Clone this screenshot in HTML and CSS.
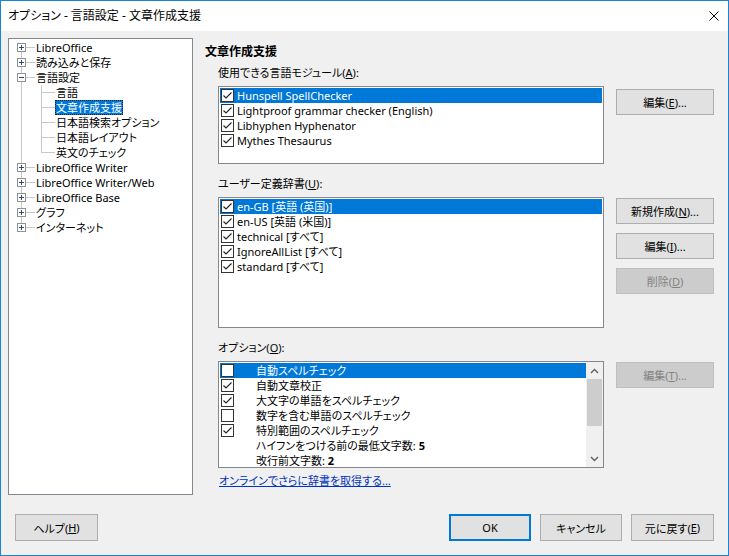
FILE: index.html
```html
<!DOCTYPE html>
<html lang="ja">
<head>
    <meta charset="UTF-8">
    <title>オプション - 言語設定 - 文章作成支援</title>
    <link rel="stylesheet" href="styles.css">
</head>
<body>
<div class="window">
    <div class="titlebar">
        <span class="title">オプション - 言語設定 - 文章作成支援</span>
        <svg class="close" width="10" height="10" viewBox="0 0 10 10"><path d="M0.5 0.5 L9.5 9.5 M9.5 0.5 L0.5 9.5" stroke="#000" stroke-width="1"/></svg>
    </div>

    <div class="body">
        <!-- navigation tree -->
        <div class="tree">
            <div class="node"><span class="exp plus"></span><span class="conn"></span><span class="txt">LibreOffice</span></div>
            <div class="node"><span class="exp plus"></span><span class="conn"></span><span class="txt">読み込みと保存</span></div>
            <div class="node"><span class="exp"></span><span class="conn"></span><span class="txt">言語設定</span></div>
            <div class="kids">
                <div class="leaf"><span class="conn2"></span><span class="txt">言語</span></div>
                <div class="leaf"><span class="conn2"></span><span class="txt sel">文章作成支援</span></div>
                <div class="leaf"><span class="conn2"></span><span class="txt">日本語検索オプション</span></div>
                <div class="leaf"><span class="conn2"></span><span class="txt">日本語レイアウト</span></div>
                <div class="leaf"><span class="conn2"></span><span class="txt">英文のチェック</span></div>
            </div>
            <div class="node"><span class="exp plus"></span><span class="conn"></span><span class="txt">LibreOffice Writer</span></div>
            <div class="node"><span class="exp plus"></span><span class="conn"></span><span class="txt">LibreOffice Writer/Web</span></div>
            <div class="node"><span class="exp plus"></span><span class="conn"></span><span class="txt">LibreOffice Base</span></div>
            <div class="node"><span class="exp plus"></span><span class="conn"></span><span class="txt">グラフ</span></div>
            <div class="node"><span class="exp plus"></span><span class="conn"></span><span class="txt">インターネット</span></div>
        </div>

        <!-- page -->
        <div class="page">
            <h2>文章作成支援</h2>

            <div class="group">
                <div class="label">使用できる言語モジュール(<u>A</u>):</div>
                <div class="list list-modules">
                    <div class="row sel"><span class="cb on"><svg width="11" height="11" viewBox="0 0 11 11"><path d="M1.5 5.5 L4 8 L9.5 2.5" fill="none" stroke="#222" stroke-width="1.1"/></svg></span>Hunspell SpellChecker</div>
                    <div class="row"><span class="cb on"><svg width="11" height="11" viewBox="0 0 11 11"><path d="M1.5 5.5 L4 8 L9.5 2.5" fill="none" stroke="#222" stroke-width="1.1"/></svg></span>Lightproof grammar checker (English)</div>
                    <div class="row"><span class="cb on"><svg width="11" height="11" viewBox="0 0 11 11"><path d="M1.5 5.5 L4 8 L9.5 2.5" fill="none" stroke="#222" stroke-width="1.1"/></svg></span>Libhyphen Hyphenator</div>
                    <div class="row"><span class="cb on"><svg width="11" height="11" viewBox="0 0 11 11"><path d="M1.5 5.5 L4 8 L9.5 2.5" fill="none" stroke="#222" stroke-width="1.1"/></svg></span>Mythes Thesaurus</div>
                </div>
                <div class="btns first">
                    <button class="btn">編集(<u>E</u>)...</button>
                </div>
            </div>

            <div class="group">
                <div class="label">ユーザー定義辞書(<u>U</u>):</div>
                <div class="list list-dicts">
                    <div class="row sel"><span class="cb on"><svg width="11" height="11" viewBox="0 0 11 11"><path d="M1.5 5.5 L4 8 L9.5 2.5" fill="none" stroke="#222" stroke-width="1.1"/></svg></span>en-GB [英語 (英国)]</div>
                    <div class="row"><span class="cb on"><svg width="11" height="11" viewBox="0 0 11 11"><path d="M1.5 5.5 L4 8 L9.5 2.5" fill="none" stroke="#222" stroke-width="1.1"/></svg></span>en-US [英語 (米国)]</div>
                    <div class="row"><span class="cb on"><svg width="11" height="11" viewBox="0 0 11 11"><path d="M1.5 5.5 L4 8 L9.5 2.5" fill="none" stroke="#222" stroke-width="1.1"/></svg></span>technical [すべて]</div>
                    <div class="row"><span class="cb on"><svg width="11" height="11" viewBox="0 0 11 11"><path d="M1.5 5.5 L4 8 L9.5 2.5" fill="none" stroke="#222" stroke-width="1.1"/></svg></span>IgnoreAllList [すべて]</div>
                    <div class="row"><span class="cb on"><svg width="11" height="11" viewBox="0 0 11 11"><path d="M1.5 5.5 L4 8 L9.5 2.5" fill="none" stroke="#222" stroke-width="1.1"/></svg></span>standard [すべて]</div>
                </div>
                <div class="btns">
                    <button class="btn">新規作成(<u>N</u>)...</button>
                    <button class="btn">編集(<u>I</u>)...</button>
                    <button class="btn" disabled>削除(<u>D</u>)</button>
                </div>
            </div>

            <div class="group">
                <div class="label">オプション(<u>O</u>):</div>
                <div class="list list-opts">
                    <div class="opt-rows">
                        <div class="row sel"><span class="cb"></span><span class="otxt">自動スペルチェック</span></div>
                        <div class="row"><span class="cb on"><svg width="11" height="11" viewBox="0 0 11 11"><path d="M1.5 5.5 L4 8 L9.5 2.5" fill="none" stroke="#222" stroke-width="1.1"/></svg></span><span class="otxt">自動文章校正</span></div>
                        <div class="row"><span class="cb on"><svg width="11" height="11" viewBox="0 0 11 11"><path d="M1.5 5.5 L4 8 L9.5 2.5" fill="none" stroke="#222" stroke-width="1.1"/></svg></span><span class="otxt">大文字の単語をスペルチェック</span></div>
                        <div class="row"><span class="cb"></span><span class="otxt">数字を含む単語のスペルチェック</span></div>
                        <div class="row"><span class="cb on"><svg width="11" height="11" viewBox="0 0 11 11"><path d="M1.5 5.5 L4 8 L9.5 2.5" fill="none" stroke="#222" stroke-width="1.1"/></svg></span><span class="otxt">特別範囲のスペルチェック</span></div>
                        <div class="row"><span class="cb none"></span><span class="otxt">ハイフンをつける前の最低文字数: <b>5</b></span></div>
                        <div class="row"><span class="cb none"></span><span class="otxt">改行前文字数: <b>2</b></span></div>
                    </div>
                    <div class="scrollbar">
                        <div class="arrow"><svg width="9" height="6" viewBox="0 0 9 6"><path d="M1 5 L4.5 1.5 L8 5" fill="none" stroke="#606060" stroke-width="1.4"/></svg></div>
                        <div class="thumb"></div>
                        <div class="track"></div>
                        <div class="arrow"><svg width="9" height="6" viewBox="0 0 9 6"><path d="M1 1 L4.5 4.5 L8 1" fill="none" stroke="#606060" stroke-width="1.4"/></svg></div>
                    </div>
                </div>
                <div class="btns">
                    <button class="btn" disabled>編集(<u>T</u>)...</button>
                </div>
            </div>

            <a class="link" href="#">オンラインでさらに辞書を取得する...</a>
        </div>
    </div>

    <div class="footer">
        <button class="btn wide">ヘルプ(<u>H</u>)</button>
        <span class="spacer"></span>
        <button class="btn default">OK</button>
        <button class="btn">キャンセル</button>
        <button class="btn wide">元に戻す(<u>E</u>)</button>
    </div>
</div>
</body>
</html>
```

FILE: styles.css
```css
* {
    box-sizing: border-box;
}

body {
    margin: 0;
    font-family: "Noto Sans", "Noto Sans CJK JP", sans-serif;
    font-size: 11px;
    font-feature-settings: "palt";
    color: #000;
}

.window {
    width: 729px;
    height: 556px;
    border: 1px solid #1883d7;
    background: #f0f0f0;
    display: flex;
    flex-direction: column;
}

.titlebar {
    height: 30px;
    flex: none;
    background: #fff;
    display: flex;
    align-items: center;
    justify-content: space-between;
    padding: 0 9px 0 7px;
}

.title {
    font-size: 12px;
    line-height: 16px;
}

.body {
    display: flex;
    padding: 7px 0 0 7px;
}

/* tree */
.tree {
    width: 185px;
    height: 457px;
    flex: none;
    border: 1px solid #828790;
    background: #fff linear-gradient(#c8c8c8, #c8c8c8) no-repeat 12px 8px / 1px 180px;
    padding-top: 1px;
}

.node, .leaf {
    height: 15px;
    display: flex;
    align-items: center;
    white-space: nowrap;
}

.node {
    padding-left: 8px;
}

.exp {
    width: 9px;
    height: 9px;
    flex: none;
    border: 1px solid #919191;
    background: linear-gradient(#2b4b7d, #2b4b7d) center / 5px 1px no-repeat, #fff;
}

.exp.plus {
    background: linear-gradient(#2b4b7d, #2b4b7d) center / 5px 1px no-repeat,
                linear-gradient(#2b4b7d, #2b4b7d) center / 1px 5px no-repeat, #fff;
}

.conn {
    width: 9px;
    height: 1px;
    background: #c8c8c8;
    flex: none;
}

.kids {
    background: linear-gradient(#c8c8c8, #c8c8c8) no-repeat 32px 0 / 1px 68px;
}

.leaf {
    padding-left: 32px;
}

.conn2 {
    width: 14px;
    height: 1px;
    background: #c8c8c8;
    flex: none;
}

.txt {
    padding: 0 1px;
    line-height: 15px;
}

.txt.sel {
    background: #0078d7;
    color: #fff;
    outline: 1px dotted #222;
    outline-offset: -1px;
}

/* page */
.page {
    margin-left: 12px;
    padding-top: 6px;
}

.page h2 {
    margin: 0;
    font-size: 12px;
    font-weight: bold;
    line-height: 16px;
}

.group {
    display: grid;
    grid-template-columns: 386px 98px;
    column-gap: 12px;
    margin-left: 13px;
    margin-top: 5px;
}

.group + .group {
    margin-top: 12px;
}

.label {
    grid-column: 1 / 3;
    line-height: 16px;
    margin-bottom: 5px;
}

.list {
    background: #fff;
    border: 1px solid #828790;
    padding: 1px;
}

.list-modules {
    height: 78px;
}

.list-dicts {
    height: 131px;
}

.list-opts {
    height: 107px;
    padding: 0;
    display: flex;
}

.opt-rows {
    flex: 1;
    padding: 1px 0 0 1px;
}

.row {
    height: 15px;
    line-height: 15px;
    display: flex;
    align-items: center;
    white-space: nowrap;
}

.row.sel {
    background: #0078d7;
    color: #fff;
}

.cb {
    width: 13px;
    height: 13px;
    flex: none;
    margin: 0 3px 0 1px;
    border: 1px solid #333;
    background: #fff;
    display: flex;
}

.cb.none {
    border: none;
    background: none;
}

.otxt {
    margin-left: 19px;
}

.scrollbar {
    width: 17px;
    flex: none;
    background: #f0f0f0;
    display: flex;
    flex-direction: column;
}

.arrow {
    height: 17px;
    display: flex;
    align-items: center;
    justify-content: center;
}

.thumb {
    height: 47px;
    margin: 0 1px;
    background: #cdcdcd;
}

.track {
    flex: 1;
}

.btns {
    display: flex;
    flex-direction: column;
    gap: 9px;
    padding-top: 1px;
}

.btns.first {
    padding-top: 3px;
}

.btn {
    height: 26px;
    border: 1px solid #adadad;
    background: #e1e1e1;
    font-family: inherit;
    font-size: 11px;
    font-feature-settings: "palt";
    color: #000;
    padding: 0;
    display: flex;
    align-items: center;
    justify-content: center;
}

.btn:disabled {
    background: #cccccc;
    border-color: #bfbfbf;
    color: #838383;
}

.link {
    display: block;
    margin: 5px 0 0 14px;
    line-height: 16px;
    color: #0033bb;
}

/* footer */
.footer {
    display: flex;
    gap: 9px;
    padding: 19px 14px 0 14px;
}

.footer .btn {
    width: 82px;
    height: 27px;
}

.footer .btn.wide {
    width: 83px;
}

.footer .btn.default {
    border-color: #0078d7;
    box-shadow: inset 0 0 0 1px #0078d7;
}

.spacer {
    flex: 1;
}
```
